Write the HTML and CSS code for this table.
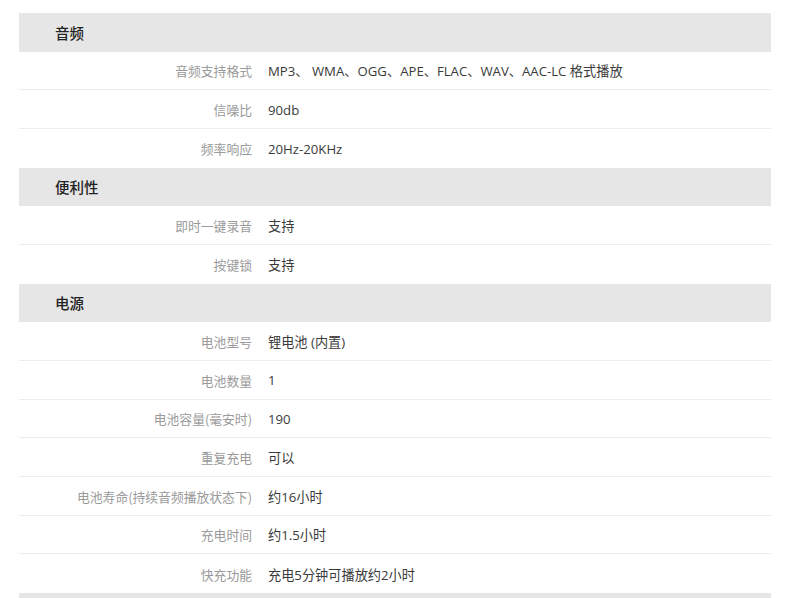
FILE: index.html
```html
<!DOCTYPE html>
<html lang="zh">
<head>
<meta charset="utf-8">
<link rel="stylesheet" href="styles.css">
</head>
<body>
<div class="spec">
  <div class="head">音频</div>
  <div class="row"><span class="k">音频支持格式</span><span class="v">MP3、 WMA、OGG、APE、FLAC、WAV、AAC-LC 格式播放</span></div>
  <div class="row"><span class="k">信噪比</span><span class="v">90db</span></div>
  <div class="row last"><span class="k">频率响应</span><span class="v">20Hz-20KHz</span></div>
  <div class="head">便利性</div>
  <div class="row"><span class="k">即时一键录音</span><span class="v">支持</span></div>
  <div class="row last"><span class="k">按键锁</span><span class="v">支持</span></div>
  <div class="head">电源</div>
  <div class="row"><span class="k">电池型号</span><span class="v">锂电池 (内置)</span></div>
  <div class="row"><span class="k">电池数量</span><span class="v">1</span></div>
  <div class="row"><span class="k">电池容量(毫安时)</span><span class="v">190</span></div>
  <div class="row"><span class="k">重复充电</span><span class="v">可以</span></div>
  <div class="row"><span class="k">电池寿命(持续音频播放状态下)</span><span class="v">约16小时</span></div>
  <div class="row"><span class="k">充电时间</span><span class="v">约1.5小时</span></div>
  <div class="row last"><span class="k">快充功能</span><span class="v">充电5分钟可播放约2小时</span></div>
  <div class="head tail"></div>
</div>
</body>
</html>
```

FILE: styles.css
```css
html, body {
  margin: 0;
  padding: 0;
  background: #fff;
}
body {
  font-family: "Open Sans", "Noto Sans CJK SC", sans-serif;
  height: 598px;
  overflow: hidden;
}
.spec {
  margin: 13px 0 0 19px;
  width: 752px;
  display: flex;
  flex-direction: column;
}
.head {
  height: 38.67px;
  flex: none;
  background: #e6e6e6;
  padding-left: 36px;
  display: flex;
  align-items: center;
  font-size: 14.5px;
  font-weight: 500;
  color: #222;
  font-family: "Noto Sans CJK SC", sans-serif;
}
.head.tail {
  height: 5px;
}
.row {
  height: 38.67px;
  flex: none;
  box-sizing: border-box;
  border-bottom: 1.5px solid #ececec;
  display: flex;
  align-items: center;
  padding-top: 1px;
}
.row.last {
  border-bottom: none;
}
.k {
  width: 233px;
  text-align: right;
  color: #9a9a9a;
  font-family: "Noto Sans CJK SC", sans-serif;
  font-size: 12.8px;
}
.v {
  margin-left: 16px;
  color: #3a3a3a;
  font-size: 13.2px;
}
```
